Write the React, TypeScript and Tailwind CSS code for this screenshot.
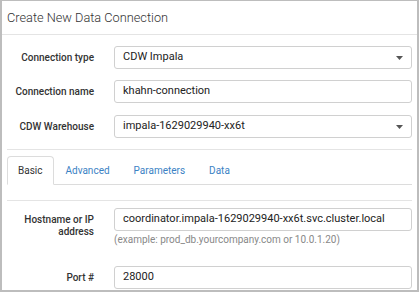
import React from 'react';

function Caret() {
  return (
    <svg className="w-[7px] h-[4px]" viewBox="0 0 7 4" fill="#555">
      <path d="M0 0h7L3.5 4z" />
    </svg>
  );
}

function Field({ label, value, select }: { label: string; value: string; select?: boolean }) {
  return (
    <div className="flex items-center">
      <div className="w-[87px] shrink-0 whitespace-nowrap text-right text-[10px] font-medium text-[#333]">{label}</div>
      <div className="ml-[20px] flex-1 h-[23px] border border-[#d0d0d0] rounded-[3px] flex items-center justify-between pl-[8px] pr-[8px] text-[11px] text-[#222]">
        <span>{value}</span>
        {select && <Caret />}
      </div>
    </div>
  );
}

export default function App() {
  return (
    <div
      className="w-[419px] h-[292px] overflow-hidden bg-white border-2 border-t border-[#bdbdbd] flex flex-col"
      style={{ fontFamily: 'Roboto, "Liberation Sans", sans-serif' }}
    >
      {/* Header */}
      <div className="h-[34px] shrink-0 flex items-center px-[5px] border-b border-[#e4e4e4]">
        <h1 className="text-[12.75px] font-light text-[#333]">Create New Data Connection</h1>
      </div>

      <div className="px-[5px]">
        <div className="mt-[11px] flex flex-col">
          <Field label="Connection type" value="CDW Impala" select />
          <div className="mt-[11px]">
            <Field label="Connection name" value="khahn-connection" />
          </div>
          <div className="mt-[12px]">
            <Field label="CDW Warehouse" value="impala-1629029940-xx6t" select />
          </div>
        </div>

        <div className="mt-[11px] border-t border-[#e4e4e4]" />

        {/* Tabs */}
        <div className="mt-[7px] flex border-b border-[#dcdcdc] h-[28px] items-end">
          <div className="h-[29px] -mb-px px-[10px] flex items-center border border-[#dcdcdc] border-b-white rounded-t-[4px] bg-white text-[10px] text-[#333]">
            Basic
          </div>
          <div className="h-[28px] px-[12px] flex items-center text-[10px] text-[#3b82c4]">Advanced</div>
          <div className="h-[28px] px-[12px] flex items-center text-[10px] text-[#3b82c4]">Parameters</div>
          <div className="h-[28px] px-[12px] flex items-center text-[10px] text-[#3b82c4]">Data</div>
        </div>

        <div className="mt-[15px] border-t border-[#e4e4e4]" />

        <div className="mt-[7px] flex items-start">
          <div className="w-[87px] shrink-0 whitespace-nowrap text-right text-[10px] font-medium text-[#333] leading-[12px] pt-[6px]">
            Hostname or IP
            <br />
            address
          </div>
          <div className="ml-[20px] flex-1">
            <div className="h-[23px] border border-[#d0d0d0] rounded-[3px] flex items-center px-[8px] text-[11px] text-[#222]">
              coordinator.impala-1629029940-xx6t.svc.cluster.local
            </div>
            <div className="mt-[1px] text-[10px] text-[#888]">(example: prod_db.yourcompany.com or 10.0.1.20)</div>
          </div>
        </div>

        <div className="mt-[19px]">
          <Field label="Port #" value="28000" />
        </div>
      </div>
    </div>
  );
}
